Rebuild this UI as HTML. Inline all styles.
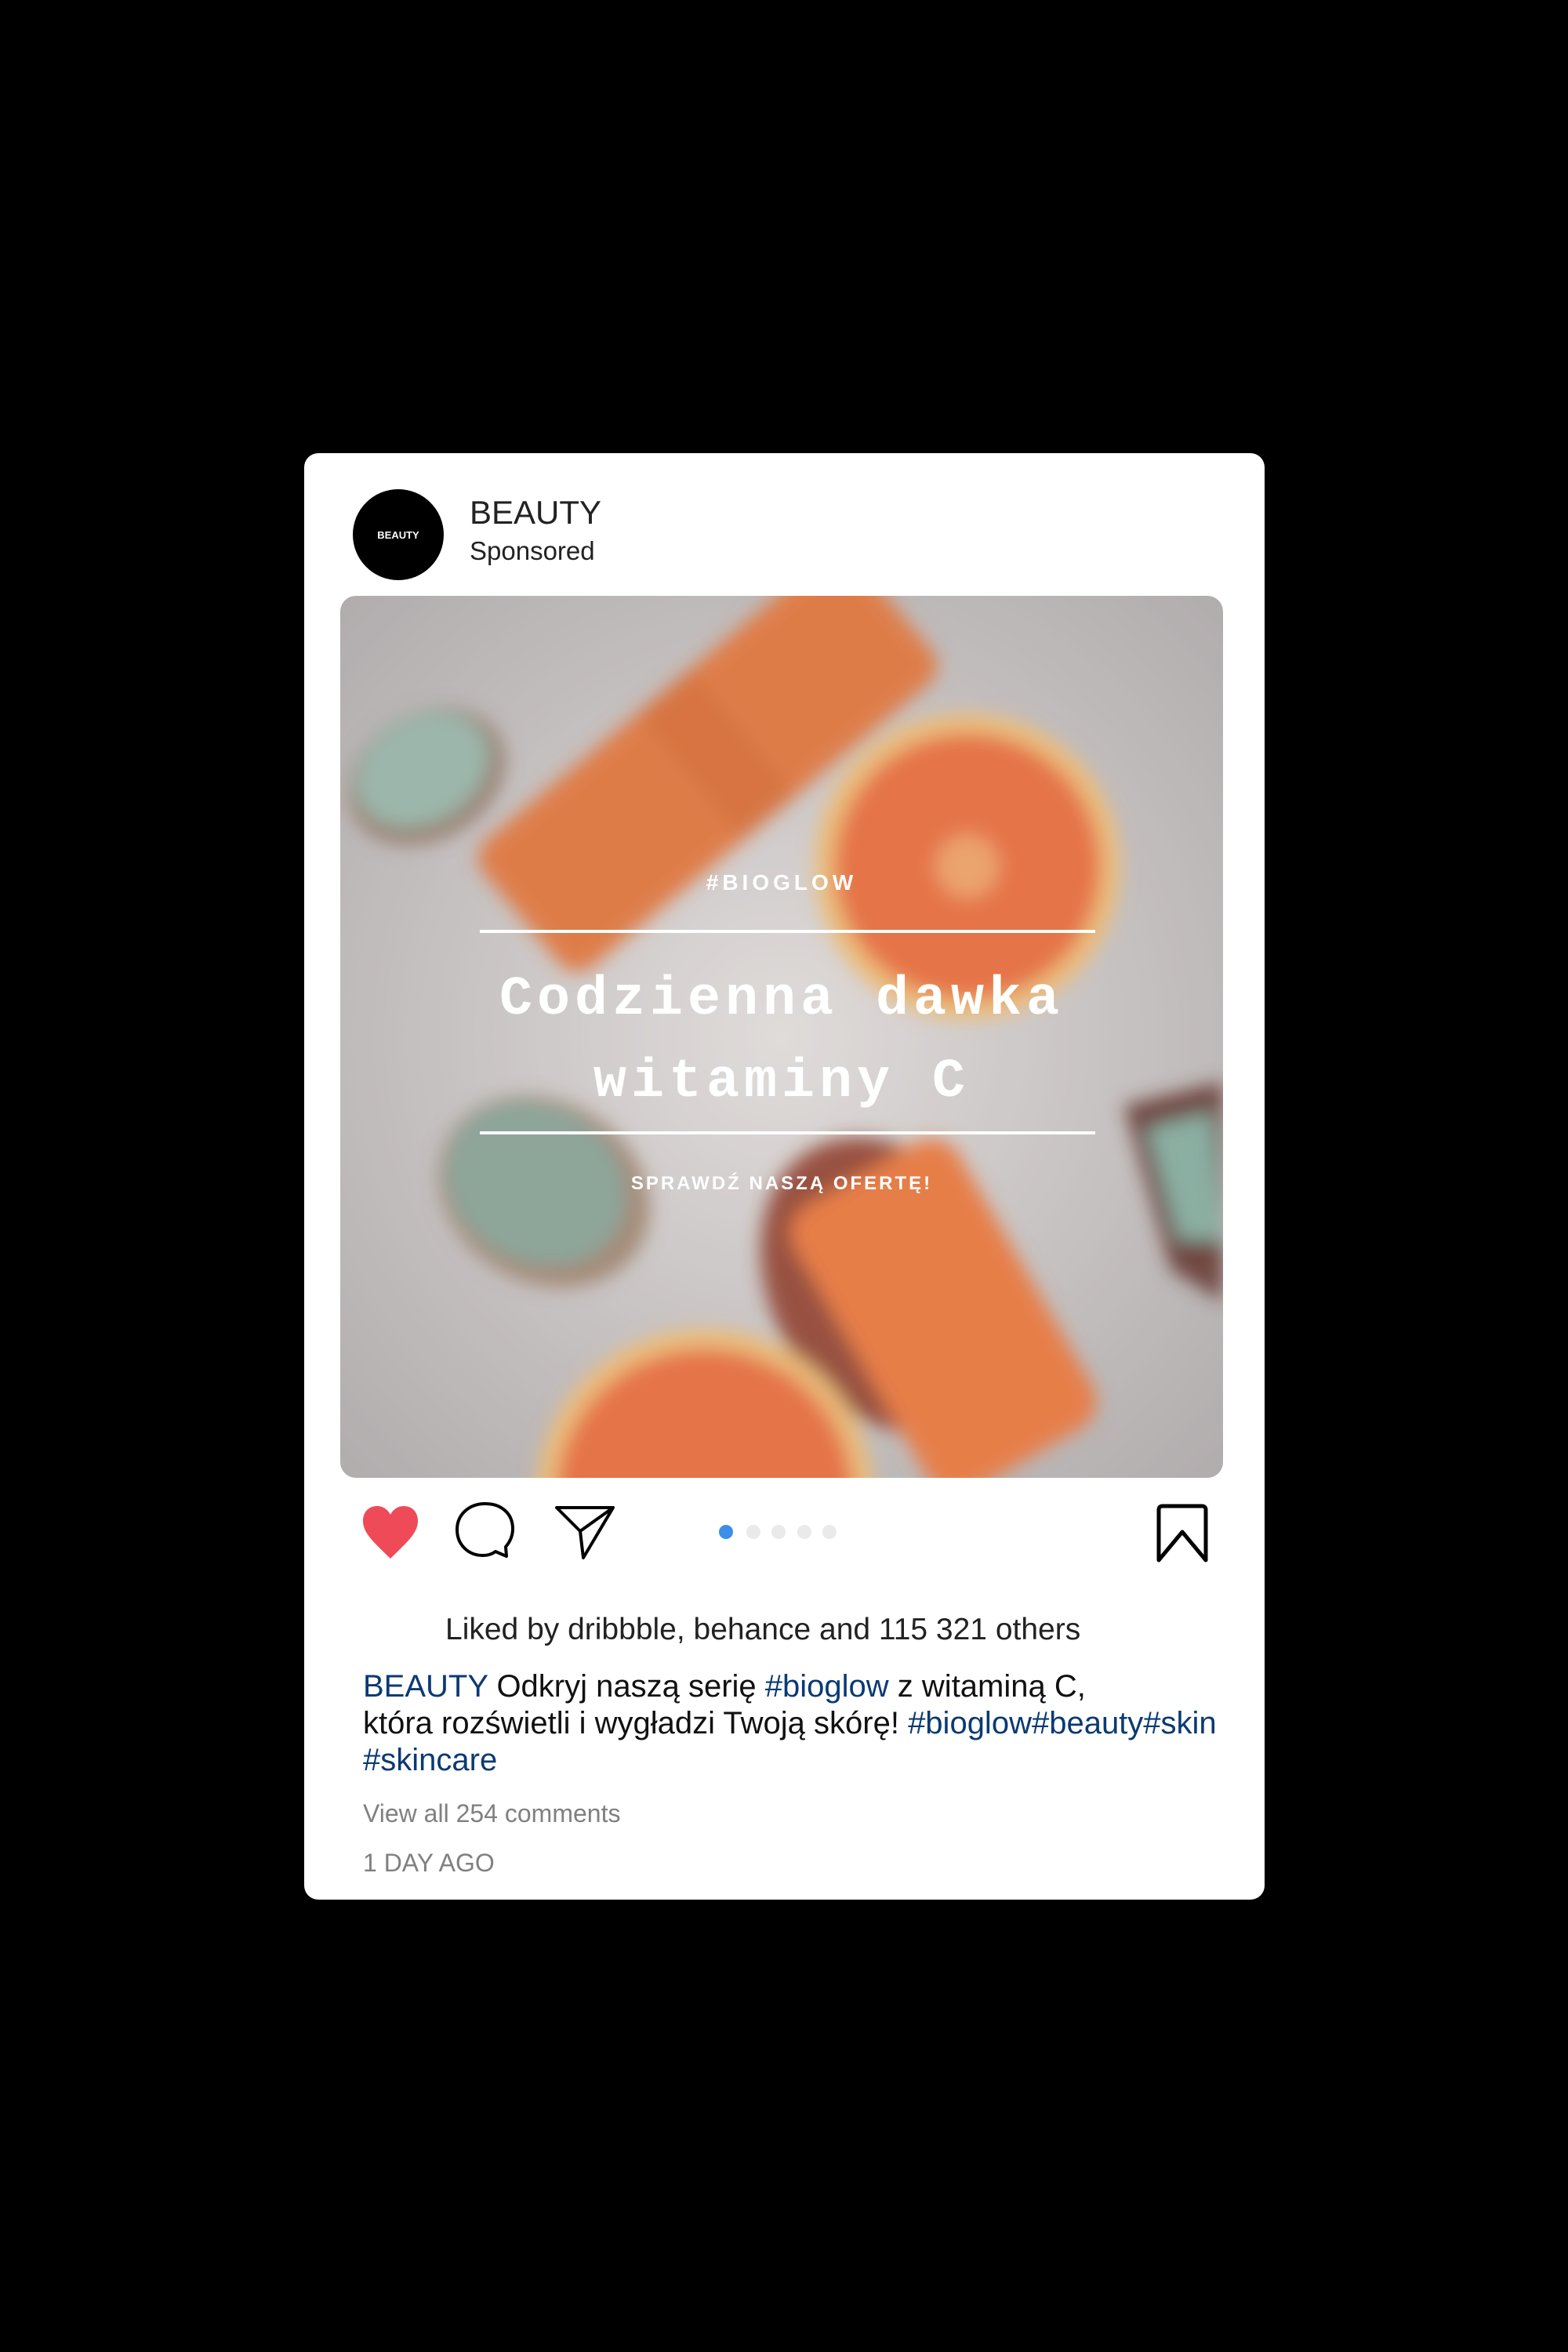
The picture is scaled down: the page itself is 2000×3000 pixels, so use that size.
<!DOCTYPE html>
<html><head><meta charset="utf-8"><style>
*{margin:0;padding:0;box-sizing:border-box}
body{width:2000px;height:3000px;background:#000;position:relative;font-family:"Liberation Sans",sans-serif;overflow:hidden}
.card{position:absolute;left:388px;top:578px;width:1225px;height:1845px;background:#fff;border-radius:18px}
.abs{position:absolute;white-space:nowrap}
.avatar{left:62px;top:46px;width:116px;height:116px;border-radius:50%;background:#000;color:#fff;font-size:13px;font-weight:bold;display:flex;align-items:center;justify-content:center}
.img{position:absolute;left:46px;top:182px;width:1126px;height:1125px;border-radius:20px;overflow:hidden}
.blue{color:#0b3a73}
</style></head><body>
<div class="card">
  <div class="abs avatar">BEAUTY</div>
  <div class="abs" style="left:211px;top:52px;font-size:42px;color:#222">BEAUTY</div>
  <div class="abs" style="left:211px;top:106px;font-size:33px;color:#222">Sponsored</div>
  <div class="img">
    <svg width="1126" height="1125" viewBox="0 0 1126 1125">
      <defs>
        <filter id="b" x="-20%" y="-20%" width="140%" height="140%"><feGaussianBlur stdDeviation="12"/></filter>
        <radialGradient id="bg" cx="50%" cy="50%" r="70%"><stop offset="0" stop-color="#e2dedc"/><stop offset="1" stop-color="#a9a5a6"/></radialGradient>
      </defs>
      <rect width="1126" height="1125" fill="url(#bg)"/>
      <g filter="url(#b)">
        <ellipse cx="110" cy="230" rx="105" ry="80" fill="#8a6a55" transform="rotate(-30 110 230)"/>
        <ellipse cx="105" cy="222" rx="90" ry="68" fill="#8fb0a3" transform="rotate(-30 105 222)"/>
        <ellipse cx="260" cy="760" rx="140" ry="115" fill="#9a7a62" transform="rotate(30 260 760)"/>
        <ellipse cx="250" cy="750" rx="120" ry="100" fill="#7e9b8e" transform="rotate(30 250 750)"/>
        <rect x="160" y="110" width="620" height="210" rx="30" fill="#e06a2a" transform="rotate(-40 465 215)"/>
        <rect x="440" y="110" width="90" height="210" fill="#d05a20" opacity=".6" transform="rotate(-40 465 215)"/>
        <circle cx="800" cy="345" r="195" fill="#f0b868"/>
        <circle cx="800" cy="345" r="170" fill="#e8602a"/>
        <circle cx="800" cy="345" r="40" fill="#f09a58"/>
        <path d="M1000 650 L1126 620 L1126 900 L1060 860 Z" fill="#5a2a22"/>
        <path d="M1030 680 L1110 660 L1126 820 L1070 820 Z" fill="#7aa898"/>
        <ellipse cx="700" cy="880" rx="200" ry="150" fill="#8a3420" transform="rotate(60 700 880)"/>
        <rect x="560" y="800" width="420" height="240" rx="40" fill="#ea6c2a" transform="rotate(60 770 920)"/>
        <circle cx="465" cy="1150" r="215" fill="#f0b868"/>
        <circle cx="465" cy="1150" r="190" fill="#e8602a"/>
      </g>
      <rect width="1126" height="1125" fill="#d8d4d2" opacity=".18"/>
    </svg>
    <div class="abs" style="left:0;width:1126px;text-align:center;top:350px;font-size:28px;font-weight:bold;letter-spacing:5px;color:#fff">#BIOGLOW</div>
    <div class="abs" style="left:178px;top:426px;width:785px;height:4px;background:#fff"></div>
    <div class="abs" style="left:0;width:1126px;text-align:center;top:463px;font-family:'Liberation Mono',monospace;font-size:70px;font-weight:bold;color:#fff;line-height:105px;white-space:normal;letter-spacing:6px">Codzienna dawka<br>witaminy C</div>
    <div class="abs" style="left:178px;top:683px;width:785px;height:4px;background:#fff"></div>
    <div class="abs" style="left:0;width:1126px;text-align:center;top:736px;font-size:24px;font-weight:bold;letter-spacing:3px;color:#fff">SPRAWDŹ NASZĄ OFERTĘ!</div>
  </div>
  <svg class="abs" style="left:70px;top:1338px" width="80" height="80" viewBox="0 0 80 80"><path d="M40 72 C20 52 5 40 5 24 C5 12 13 5 23 5 C31 5 37 10 40 16 C43 10 49 5 57 5 C67 5 75 12 75 24 C75 40 60 52 40 72Z" fill="#ee4a57"/></svg>
  <svg class="abs" style="left:190px;top:1335px" width="80" height="80" viewBox="0 0 80 80"><path d="M68 72 L67 60 C73 53 76 45 76 37 C76 18 62 5 41 5 C20 5 5 19 5 38 C5 57 19 71 38 71 C45 71 50 69 54 66 Z" fill="none" stroke="#000" stroke-width="4" stroke-linejoin="round"/></svg>
  <svg class="abs" style="left:318px;top:1335px" width="80" height="80" viewBox="0 0 80 80"><path d="M4 10 L76 10 L38 74 L34 40 Z M34 40 L76 10" fill="none" stroke="#000" stroke-width="4" stroke-linejoin="round"/></svg>
  <div class="abs" style="left:529px;top:1367px;width:18px;height:18px;border-radius:50%;background:#3b8fe8"></div>
  <div class="abs" style="left:564px;top:1367px;width:18px;height:18px;border-radius:50%;background:#eaeaea"></div>
  <div class="abs" style="left:596px;top:1367px;width:18px;height:18px;border-radius:50%;background:#eaeaea"></div>
  <div class="abs" style="left:629px;top:1367px;width:18px;height:18px;border-radius:50%;background:#eaeaea"></div>
  <div class="abs" style="left:661px;top:1367px;width:18px;height:18px;border-radius:50%;background:#eaeaea"></div>
  <svg class="abs" style="left:1086px;top:1340px" width="68" height="76" viewBox="0 0 68 76"><path d="M4 72 L4 8 Q4 3 9 3 L59 3 Q64 3 64 8 L64 72 L34 36 Z" fill="none" stroke="#000" stroke-width="5" stroke-linejoin="round"/></svg>
  <div class="abs" style="left:180px;top:1479px;font-size:39px;color:#222">Liked by dribbble, behance and 115 321 others</div>
  <div class="abs" style="left:75px;top:1550px;font-size:40px;line-height:47px;color:#111;white-space:normal;width:1145px"><span class="blue">BEAUTY</span> Odkryj naszą serię <span class="blue">#bioglow</span> z witaminą C,<br>która rozświetli i wygładzi Twoją skórę! <span class="blue">#bioglow#beauty#skin</span><br><span class="blue">#skincare</span></div>
  <div class="abs" style="left:75px;top:1717px;font-size:32px;color:#808080">View all 254 comments</div>
  <div class="abs" style="left:75px;top:1780px;font-size:32px;color:#808080">1 DAY AGO</div>
</div>
</body></html>
